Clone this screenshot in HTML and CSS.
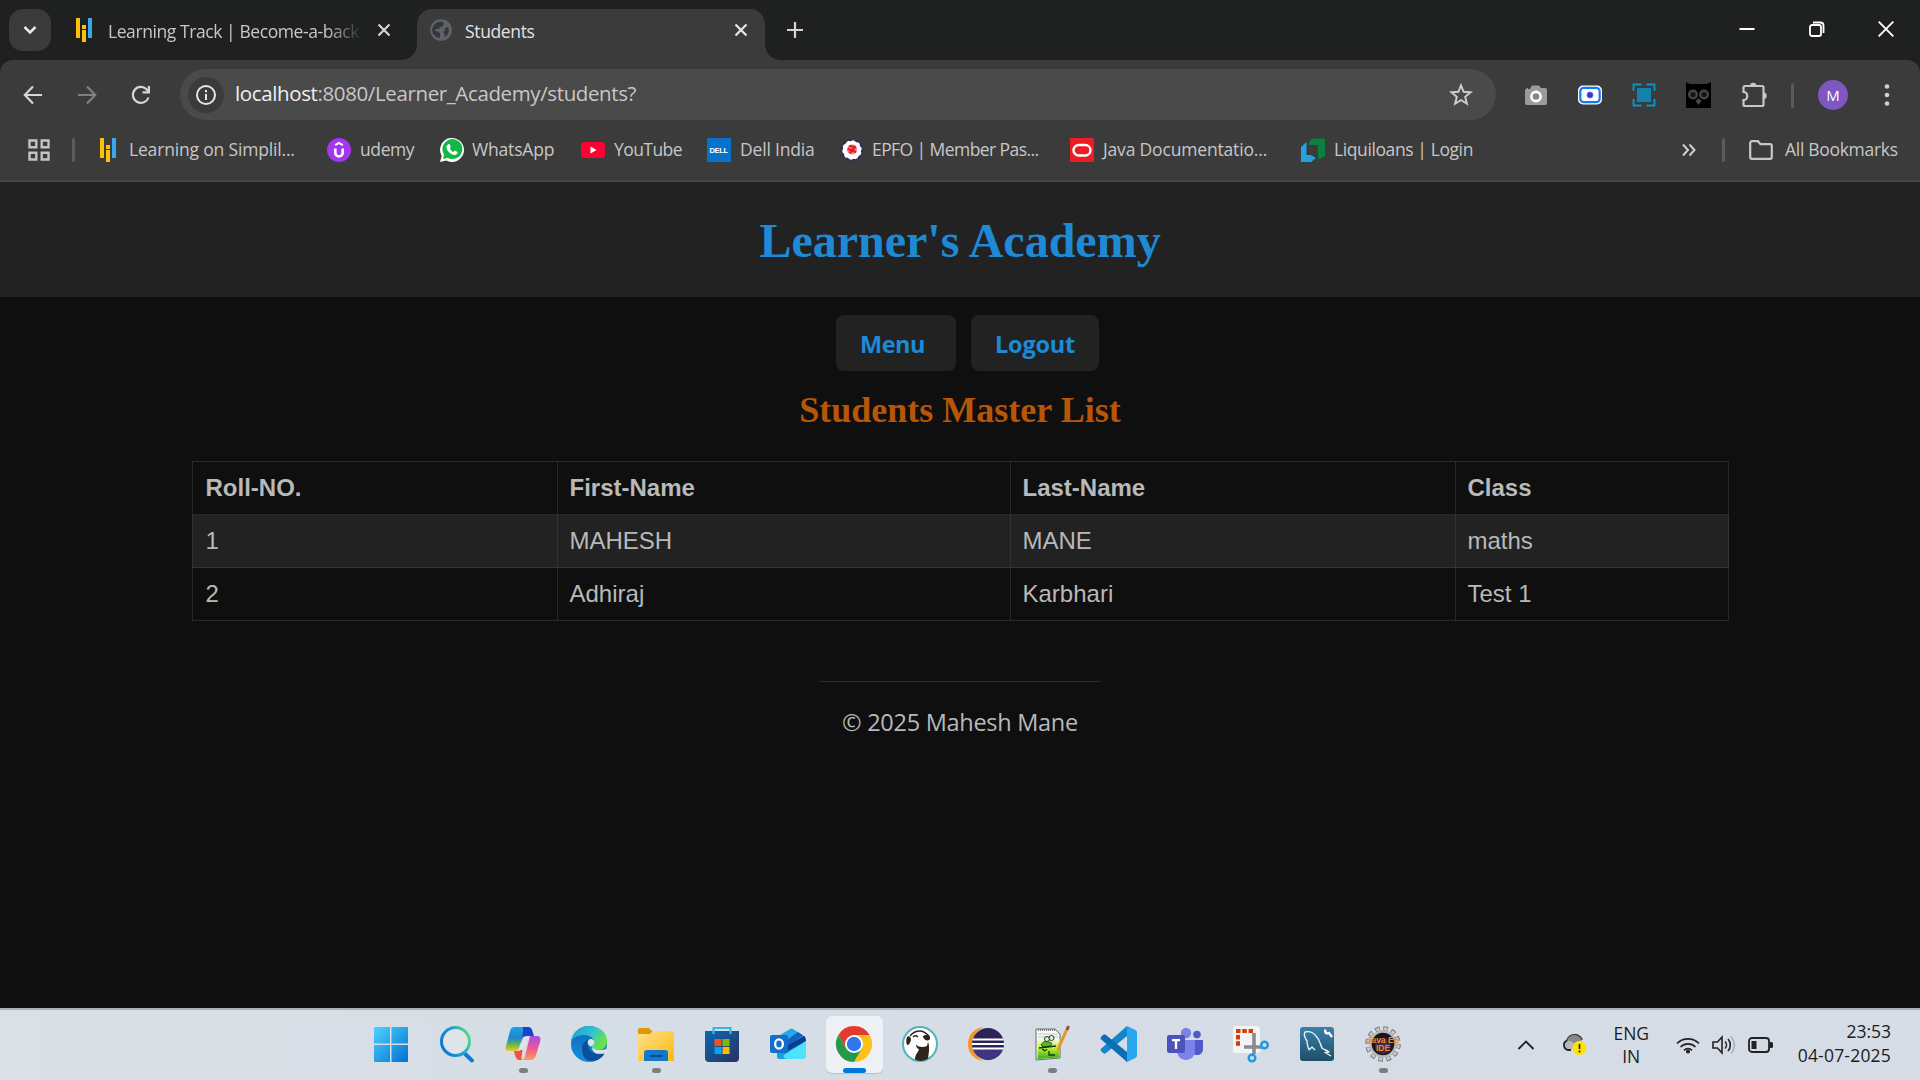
FILE: index.html
```html
<!DOCTYPE html>
<html lang="en">
<head>
<meta charset="utf-8">
<title>Students</title>
<link rel="stylesheet" href="styles.css">
</head>
<body>
<svg class="defs" width="0" height="0" aria-hidden="true">
  <defs>
    <symbol id="simpli" viewBox="0 0 16 24"><path fill="#ffc107" d="M0 0h4v20H0zM6 7h4v4H6zM6 12h4v12H6z"/><path fill="#36a9e8" d="M12 0h4v20h-4z"/></symbol>
    <symbol id="cross" viewBox="0 0 14 14"><path fill="none" stroke="currentColor" stroke-width="2.2" d="M1.5 1.5l11 11M12.500 1.500l-11 11"/></symbol>
    <linearGradient id="gWin" x1="0" y1="0" x2="1" y2="1"><stop offset="0" stop-color="#4fd3ff"/><stop offset="1" stop-color="#0070d0"/></linearGradient>
    <linearGradient id="gFind" x1="0" y1="0.6" x2="1" y2="0.2"><stop offset="0" stop-color="#0a78d6"/><stop offset=".55" stop-color="#1fa5c9"/><stop offset="1" stop-color="#5fe07c"/></linearGradient>
    <linearGradient id="gCopA" x1="0" y1="0" x2="0" y2="1"><stop offset="0" stop-color="#16a4ee"/><stop offset=".45" stop-color="#1f87c8"/><stop offset=".7" stop-color="#57b25c"/><stop offset="1" stop-color="#f2cc13"/></linearGradient>
    <linearGradient id="gCopB" x1="0" y1="0" x2="0" y2="1"><stop offset="0" stop-color="#a64df0"/><stop offset=".5" stop-color="#ef5690"/><stop offset="1" stop-color="#ff9a5a"/></linearGradient>
    <linearGradient id="gEdge" x1="0" y1="0" x2="1" y2=".5"><stop offset="0" stop-color="#2196de"/><stop offset=".55" stop-color="#2fc2cf"/><stop offset="1" stop-color="#6be34b"/></linearGradient>
    <linearGradient id="gEdge2" x1="0" y1="0" x2="0" y2="1"><stop offset="0" stop-color="#1164b4"/><stop offset="1" stop-color="#148fe0"/></linearGradient>
    <linearGradient id="gFold" x1="0" y1="0" x2="1" y2="1"><stop offset="0" stop-color="#ffe08a"/><stop offset="1" stop-color="#fdb913"/></linearGradient>
    <linearGradient id="gStore" x1="0" y1="0" x2="1" y2="1"><stop offset="0" stop-color="#0c68b8"/><stop offset="1" stop-color="#27325c"/></linearGradient>
    <linearGradient id="gSql" x1="0" y1="0" x2="0" y2="1"><stop offset="0" stop-color="#3a80aa"/><stop offset="1" stop-color="#1f4f68"/></linearGradient>
    <linearGradient id="gNote" x1="0" y1="0" x2="0" y2="1"><stop offset="0" stop-color="#f4fae6"/><stop offset=".5" stop-color="#b5ee2c"/><stop offset="1" stop-color="#2fae1a"/></linearGradient>
  </defs>
</svg>

<header class="browser">
  <div class="tabstrip">
    <div class="tab-search"><svg width="14" height="10" viewBox="0 0 14 10"><path d="M1.500 2l5.500 5.500L12.500 2" fill="none" stroke="#e8e8e8" stroke-width="2.500"/></svg></div>
    <div class="tab">
      <svg width="16" height="24"><use href="#simpli"/></svg>
      <span class="tab-title fade">Learning Track | Become-a-back</span>
      <svg class="close" width="14" height="14"><use href="#cross"/></svg>
    </div>
    <div class="tab active">
      <svg width="22" height="22" viewBox="0 0 22 22"><circle cx="11" cy="11" r="10.800" fill="#5f6368"/><path fill="#34363a" d="M11 2.500l3 1.500-1 3-3 1-1 2H6l-1 2 3 .5 2 2v4.500C5 18.500 2.200 15 2.200 11S6 2.500 11 2.500zM18 8c2 4 .5 8-3.500 10v-3l-1-2 2-2.500-1.500-1z"/></svg>
      <span class="tab-title">Students</span>
      <svg class="close" width="14" height="14"><use href="#cross"/></svg>
    </div>
    <svg class="newtab" width="16" height="16" viewBox="0 0 16 16"><path d="M8 0v16M0 8h16" stroke="#d5d5d5" stroke-width="2.200"/></svg>
    <div class="winctl">
      <svg width="16" height="16" viewBox="0 0 16 16"><path d="M.5 8h15" stroke="#fff" stroke-width="2"/></svg>
      <svg width="16" height="16" viewBox="0 0 16 16" fill="none" stroke="#fff" stroke-width="1.800"><rect x="1" y="4" width="11" height="11" rx="2"/><path d="M4 1.500h7.500a3 3 0 0 1 3 3V12"/></svg>
      <svg width="16" height="16" viewBox="0 0 16 16"><path d="M.7.700l14.600 14.600M15.300.700L.7 15.300" stroke="#fff" stroke-width="1.900"/></svg>
    </div>
  </div>

  <div class="toolbar">
    <svg width="20" height="20" viewBox="0 0 20 20" fill="none" stroke="#d6d6d6" stroke-width="2.200"><path d="M19 10H2.500M10 1.500L1.800 10l8.200 8.500"/></svg>
    <svg width="20" height="20" viewBox="0 0 20 20" fill="none" stroke="#818181" stroke-width="2.200"><path d="M1 10h16.500M10 1.500l8.200 8.500-8.200 8.500"/></svg>
    <svg width="20" height="20" viewBox="0 0 20 20"><path d="M17.500 12.500A8 8 0 1 1 15.500 4.200L18 7" fill="none" stroke="#d6d6d6" stroke-width="2.200"/><path d="M19 1v7.500h-7.500V6.300h5.300V1z" fill="#d6d6d6"/></svg>
    <div class="omnibox">
      <span class="info"><svg width="20" height="20" viewBox="0 0 20 20"><circle cx="10" cy="10" r="9" fill="none" stroke="#e6e6e6" stroke-width="2"/><path d="M9 5h2v2.200H9zM9 9h2v6H9z" fill="#e6e6e6"/></svg></span>
      <span class="url"><b>localhost</b>:8080/Learner_Academy/students?</span>
      <svg width="24" height="24" viewBox="0 0 24 24"><path d="M12 2.300l2.600 6.500 7 .5-5.400 4.500 1.700 6.900L12 17l-5.900 3.700 1.700-6.900-5.400-4.500 7-.5z" fill="none" stroke="#cfcfcf" stroke-width="1.900"/></svg>
    </div>
    <div class="exts">
      <svg width="24" height="24" viewBox="0 0 24 24"><path fill="#9b9b9b" d="M1 7l2-2h1v1h2l2-3.500h7L17 5h4a2 2 0 0 1 2 2v13a2 2 0 0 1-2 2H3a2 2 0 0 1-2-2z"/><circle cx="12" cy="13.500" r="4.600" fill="#858585" stroke="#fff" stroke-width="2.600"/></svg>
      <svg width="24" height="24" viewBox="0 0 24 24"><rect x="0" y="2.500" width="24" height="19" rx="5" fill="#fff"/><rect x="2.300" y="4.800" width="19.400" height="14.400" rx="3.500" fill="#fff" stroke="#1478ff" stroke-width="2.200"/><circle cx="12" cy="12" r="3" fill="#303bd0" stroke="#5f68e8" stroke-width="1"/></svg>
      <svg width="24" height="24" viewBox="0 0 24 24"><path fill="#1183ac" d="M5 5h14v14H5z"/><path fill="none" stroke="#0b96cf" stroke-width="1.800" d="M1.500 8V1.500h8M14.500 1.500h8V8M22.500 16v6.500h-8M9.500 22.500h-8V16"/></svg>
      <svg width="25" height="26" viewBox="0 0 25 26"><path fill="#000" d="M0 0l4 2h17l4-2v26H0z"/><g fill="#151515" stroke="#454545" stroke-width="2.400"><circle cx="7" cy="12.500" r="3.800"/><circle cx="18" cy="12.500" r="3.800"/></g><path fill="#454545" d="M12.500 16l3 3-3 4-3-4z"/></svg>
      <svg width="26" height="26" viewBox="0 0 26 26"><path fill="none" stroke="#c7c7c7" stroke-width="2.200" d="M4 4h17a1.500 1.500 0 0 1 1.500 1.500v17A1.500 1.500 0 0 1 21 24H4a1.500 1.500 0 0 1-1.500-1.500v-4.300c5 0 5-8.400 0-8.400V5.500A1.500 1.500 0 0 1 4 4z"/><path fill="#c7c7c7" d="M9 4a3.200 3.200 0 0 1 6.400 0zM22.500 10.500a3.200 3.200 0 0 1 0 6.400z"/></svg>
    </div>
    <i class="vline"></i>
    <span class="avatar">M</span>
    <svg width="6" height="26" viewBox="0 0 6 26" fill="#d0d0d0"><circle cx="3" cy="4.500" r="2.300"/><circle cx="3" cy="13" r="2.300"/><circle cx="3" cy="21.500" r="2.300"/></svg>
  </div>

  <nav class="bookmarks">
    <svg width="22" height="22" viewBox="0 0 22 22" fill="none" stroke="#c4c4c4" stroke-width="2.400"><path d="M1.500 1.500h6.800v6.800H1.500zM13.700 1.500h6.800v6.800h-6.800zM1.500 13.700h6.800v6.800H1.500zM13.700 13.700h6.800v6.800h-6.800z"/></svg>
    <i class="vline"></i>
    <svg width="16" height="24"><use href="#simpli"/></svg><span class="loose">Learning on Simplil...</span>
    <svg width="24" height="24" viewBox="0 0 24 24"><circle cx="12" cy="12" r="12" fill="#a435f0"/><path d="M8.300 10.500v4.300a3.700 3.700 0 0 0 7.400 0v-4.300" fill="none" stroke="#fff" stroke-width="2.600"/><path d="M8.200 7.200L12 4.900l3.800 2.300" fill="none" stroke="#fff" stroke-width="2"/></svg><span>udemy</span>
    <svg width="24" height="24" viewBox="0 0 24 24"><path fill="#fff" d="M0 24l1.700-6A12 12 0 1 1 6.200 22.400z"/><path fill="#10b943" d="M3 21l1-4.500a10 10 0 1 1 3.500 3.300z"/><path fill="#fff" d="M8 6.500c1-.8 1.700-.3 2 .5l.8 1.900-1 1.500c.8 1.600 2 2.800 3.700 3.500l1.300-1.300 2.700 1.300c.3 2-1.700 3.300-3.500 3-4-.8-7.300-4-7.500-7.600 0-1 .6-2 1.500-2.800z"/></svg><span class="loose">WhatsApp</span>
    <svg width="24" height="16" viewBox="0 0 24 16"><rect width="24" height="16" rx="3.500" fill="#ff0033"/><path fill="#fff" d="M9.500 4.500v7l6-3.500z"/></svg><span class="tight">YouTube</span>
    <svg width="24" height="24" viewBox="0 0 24 24"><path fill="#0672cb" d="M0 0h24v24H0z"/><text class="dell" x="2.500" y="15">DELL</text></svg><span class="loose">Dell India</span>
    <svg width="22" height="22" viewBox="0 0 22 22"><circle cx="11" cy="11" r="9.800" fill="#fff"/><circle cx="11" cy="11" r="10" fill="none" stroke="#182a70" stroke-width="1.800" stroke-dasharray="2.600 3.680"/><circle cx="11" cy="10.500" r="5" fill="#f8747a"/><path d="M7 9.500l3 2 5-4M8.500 14l3.500-3 3 2.500M8 7l6 1" fill="none" stroke="#e01c26" stroke-width="2"/></svg><span class="tight">EPFO | Member Pas...</span>
    <svg width="24" height="24" viewBox="0 0 24 24"><path fill="#ed1c24" d="M0 0h24v24H0z"/><rect x="3.500" y="7" width="17" height="10.500" rx="5.250" fill="none" stroke="#fff" stroke-width="2.400"/></svg><span class="loose">Java Documentatio...</span>
    <svg width="24" height="24" viewBox="0 0 24 24"><path fill="#22a2df" d="M0 9l5.500-5v13h4.500l5 3-5 4H0z"/><path fill="#0c8042" d="M8 4l3-3.500h13V18l-7 3.500V7h-9z"/></svg><span>Liquiloans | Login</span>
    <svg width="14" height="14" viewBox="0 0 14 14" fill="none" stroke="#cfcfcf" stroke-width="2"><path d="M1 1.500L6 7l-5 5.500M7.500 1.500L12.500 7l-5 5.500"/></svg>
    <i class="vline"></i>
    <svg width="24" height="20" viewBox="0 0 24 20"><path d="M1.200 17V3A1.800 1.800 0 0 1 3 1.200h6l2.500 3H21A1.800 1.800 0 0 1 22.800 6v11A1.800 1.800 0 0 1 21 18.800H3A1.800 1.800 0 0 1 1.200 17z" fill="none" stroke="#c7c7c7" stroke-width="2.200"/></svg><span class="all">All Bookmarks</span>
  </nav>
</header>

<main class="page">
  <div class="banner"><h1>Learner's Academy</h1></div>
  <div class="actions"><a class="btn menu">Menu</a><a class="btn logout">Logout</a></div>
  <h2>Students Master List</h2>
  <table class="list">
    <colgroup><col class="c1"><col class="c2"><col class="c3"><col class="c4"></colgroup>
    <tr><th>Roll-NO.</th><th>First-Name</th><th>Last-Name</th><th>Class</th></tr>
    <tr class="odd"><td>1</td><td>MAHESH</td><td>MANE</td><td>maths</td></tr>
    <tr><td>2</td><td>Adhiraj</td><td>Karbhari</td><td>Test 1</td></tr>
  </table>
  <footer><span>© 2025 Mahesh Mane</span></footer>
</main>

<div class="taskbar">
  <div class="apps">
    <div class="app"><svg viewBox="0 0 36 36"><path fill="url(#gWin)" d="M1 2a1 1 0 0 1 1-1h15v16.500H1zM18.500 1H34a1 1 0 0 1 1 1v15.500H18.500zM1 19h16v17H2a1 1 0 0 1-1-1zM18.500 19H35v16a1 1 0 0 1-1 1H18.500z"/></svg></div>
    <div class="app"><svg viewBox="0 0 36 36"><path d="M24 26l9 8.500" stroke="#1479d4" stroke-width="4" stroke-linecap="round"/><circle cx="16.500" cy="15.500" r="14" fill="#dfe5ea" stroke="url(#gFind)" stroke-width="3"/></svg></div>
    <div class="app run"><svg viewBox="0 0 36 36"><path fill="url(#gCopA)" d="M9 1h14c-2 0-3 2-4 5l-5 16c-1 2-2 3-4 3H4c-3 0-4-2-3-5L5 5c1-3 2-4 4-4z"/><path fill="#1745c5" d="M18 1h6c2 0 3 2 4 6l1 3h-6c-3 0-4 1-5 4l-2 4 2-12z"/><path fill="#f4523b" d="M9 25h4c2 0 3-1 4-3l1-3-1 9c-1 4-1 6 2 6h-5c-2 0-3-2-4-5z"/><path fill="url(#gCopB)" d="M25 10h7c3 0 4 2 3 6l-4 13c-1 4-3 5-6 5h-9c2 0 3-1 4-4z"/><path fill="#dde3ea" d="M18 11l5-1-5 14h-4z"/></svg></div>
    <div class="app"><svg viewBox="0 0 36 36"><circle cx="18" cy="18" r="18" fill="url(#gEdge2)"/><path fill="url(#gEdge)" d="M0 16C1 6 9 0 18 0c11 0 18 7 18 15 0 6-4 9-9 9-4 0-6-1-6-2 0-2 2-2 2-6 0-4-4-7-10-7C7 9 2 11 0 16z"/><path fill="#0b4f9c" d="M11 23c0-6 4-9 7-9-2 4-1 8 2 11 4 4 9 4 14 2-4 7-12 10-18 7-3-2-5-6-5-11z"/><path fill="#dce3eb" d="M22 21c-2-1-3 0-5-3-1-3 1-5 3-5 3 0 4 3 3 5-1 2-3 2-1 4 2 2 6 3 14 1v5c-1-2-9 2-13-2-2-2-2-3-1-5z"/></svg></div>
    <div class="app run"><svg viewBox="0 0 36 36"><path fill="#dc9a08" d="M0 4a2 2 0 0 1 2-2h9l4 4v6H0z"/><path fill="url(#gFold)" d="M0 8h12l3-3h20a1 1 0 0 1 1 1v29H0z"/><path fill="#1278cc" d="M6 35v-8a3 3 0 0 1 3-3h18a3 3 0 0 1 3 3v8z"/><path d="M12 30h12" stroke="#0b4d90" stroke-width="2" stroke-linecap="round"/></svg></div>
    <div class="app"><svg viewBox="0 0 36 36"><path d="M9.500 8V2h17v6" fill="none" stroke="#31b9ec" stroke-width="2.200"/><path fill="url(#gStore)" d="M1 5h34v27a4 4 0 0 1-4 4H5a4 4 0 0 1-4-4z"/><path d="M9.500 8V5M26.500 8V5" stroke="#31b9ec" stroke-width="2.200"/><path fill="#f25022" d="M10.500 13h7v7h-7z"/><path fill="#7fba00" d="M18.500 13h7v7h-7z"/><path fill="#00a4ef" d="M10.500 21h7v7h-7z"/><path fill="#ffb900" d="M18.500 21h7v7h-7z"/></svg></div>
    <div class="app"><svg viewBox="0 0 36 36"><path fill="#28a8ea" d="M7 11L20 3c1-.5 2-.5 3 0l11 7v6H7z"/><path fill="#1560bd" d="M17 14L28 6l5 3.500-16 12z"/><path fill="#1a9ee2" d="M7 22l28-6v14a3 3 0 0 1-3 3H9a2 2 0 0 1-2-2z"/><path fill="#4ee3fb" d="M14 29l22-14v15a3 3 0 0 1-3 3H17c-3 0-4-3-3-4z"/><path fill="#053f90" d="M17 20l17-10c1 .5 2 2 2 5L18 25z"/><rect x="0" y="9" width="18" height="18" rx="2" fill="#0f6fcb"/><ellipse cx="9" cy="18" rx="3.900" ry="4.600" fill="none" stroke="#fff" stroke-width="2.300"/></svg></div>
    <div class="app current"><svg viewBox="0 0 36 36"><path fill="#e43a2e" d="M2.400 9A18 18 0 0 1 33.600 9L18 9l-7.800 13.500z"/><path fill="#fdc018" d="M33.600 9A18 18 0 0 1 18 36l7.800-13.500L18 9z"/><path fill="#279847" d="M18 36A18 18 0 0 1 2.400 9l7.800 13.500h15.600z"/><circle cx="18" cy="18" r="9" fill="#fff"/><circle cx="18" cy="18" r="7.200" fill="#2f77ee"/></svg></div>
    <div class="app"><svg viewBox="0 0 36 36"><circle cx="18" cy="18" r="17" fill="#fff" stroke="#53b3bd" stroke-width="2"/><path fill="none" stroke="#30221c" stroke-width="1.300" d="M8 10c3-4 7-5 10-5 3 0 6 2 9 5M11 11c2-2 4-1 5 0"/><path fill="#30221c" d="M21 10c2-1.500 5-1.500 7 .5.500 3-1 4-3 4-2-.5-4-2-4-4.500zM5 11c2-2 4 0 4 3-1 3-2 5-4 5-1-3-1-6 0-8zM13 33.500c0-5 3-7 4-10-2-1-3-3-3-5 3 3 7 3 11 1.500l1-4c1.500 3 1 7 1 9l-1 7.500c-4 3-9 3-13 1z"/></svg></div>
    <div class="app"><svg viewBox="0 0 36 36"><path fill="#f7941e" d="M16 1C6 2 0 9 0 18s6 16 16 17C8 31 4 25 4 18S8 5 16 1z"/><circle cx="20" cy="18" r="16" fill="#2c2255"/><path fill="#5145a4" opacity=".55" d="M5 23h30a16 16 0 0 1-30 0z"/><path stroke="#fff" stroke-width="2" d="M4.500 13.500h31M4 18h32M4.500 22.500h31"/></svg></div>
    <div class="app run"><svg viewBox="0 0 36 36"><path fill="#f8f8f4" stroke="#6a6a62" d="M2 3h19l5 5v24L2 34z"/><path d="M4 4h17" stroke="#777" stroke-width="2" stroke-dasharray="1 1"/><path stroke="#b7c7cd" d="M4 8h20M4 11h20"/><path fill="url(#gNote)" d="M3.500 13h22v18.500l-22 1.500z"/><path fill="#58b52c" stroke="#21450e" stroke-width=".8" d="M7 19c2-4 5-4 8-3 4 1 4 3 0 4-3 1-6 1-8-1z"/><circle cx="13" cy="13" r="2.500" fill="#d9f2d5" stroke="#243d1e"/><circle cx="17.500" cy="12" r="2.500" fill="#d9f2d5" stroke="#243d1e"/><path stroke="#183715" stroke-width="1.300" fill="none" d="M5 22l17-2M9 20c-2 4 2 6 4 3M15 25v4h6"/><path d="M24 25l1-4L33 3" stroke="#e39a25" stroke-width="3" fill="none"/><path d="M33 4l1.500-4" stroke="#9a4b45" stroke-width="3"/></svg></div>
    <div class="app"><svg viewBox="0 0 36 36"><path fill="#1386cd" d="M26 0v10L5 27c-1 1-2 1-3 0l-2-2c-.6-1-.5-2 .3-2.500z"/><path fill="#0b6fb5" d="M26 36V26L5 9C4 8.400 3 8.400 2 9L0 11c-.6 1-.5 2 .3 2.500z"/><path fill="#28a8f0" d="M26 0l8.500 4A3 3 0 0 1 36 6.500v23a3 3 0 0 1-1.500 2.500L26 36z"/></svg></div>
    <div class="app"><svg viewBox="0 0 36 36"><circle cx="19" cy="7" r="5.200" fill="#7b83eb"/><circle cx="30" cy="8.500" r="3.800" fill="#5059c9"/><path fill="#5059c9" d="M25 14h11v9c0 4-3 6-6 6s-5-2-5-5z"/><path fill="#7b83eb" d="M10 14h18v11c0 5-4 9-9 9s-9-4-9-9z"/><rect x="0" y="9" width="18" height="18" rx="2" fill="#4b53bc"/><path fill="#fff" d="M5 13h8v2.200h-2.800V23H7.800v-7.800H5z"/></svg></div>
    <div class="app"><svg viewBox="0 0 36 36"><rect x="0" y="0" width="27" height="27" rx="3" fill="#f3f4f5"/><path d="M3 5h17M5 9v11" fill="none" stroke="#d83b01" stroke-width="4" stroke-dasharray="4.500 1.800"/><path d="M21 7v21M11 21h18" stroke="#888c91" stroke-width="3.600"/><g fill="none" stroke="#1d9ce5" stroke-width="2.400"><circle cx="31.500" cy="19" r="3.300"/><circle cx="19" cy="32" r="3.300"/></g></svg></div>
    <div class="app"><svg viewBox="0 0 36 36"><rect x="1" y="1" width="34" height="34" rx="3" fill="url(#gSql)"/><path fill="none" stroke="#e8f2f7" stroke-width="1.400" stroke-linejoin="round" d="M10 24c-1-3-2-6-2-9C6 12 4 9 6 6c4-1 8 0 11 4 4 4 4 8 6 12 2 2 5 2 7 4l-4 .5 6 3.500M10 24l3-3 3 3"/><path d="M26.500 3.500c-1 3 1 4.500 3.500 3.500l3 4" fill="none" stroke="#fff" stroke-width="2.400"/></svg></div>
    <div class="app run"><svg viewBox="0 0 36 36"><circle cx="18" cy="18" r="15.500" fill="none" stroke="#77797b" stroke-width="4.600" stroke-dasharray="4.600 3.500"/><circle cx="18" cy="18" r="15.300" fill="none" stroke="#c9cacb" stroke-width="3" stroke-dasharray="3.200 4.810" stroke-dashoffset="-.7"/><circle cx="18" cy="18" r="12.500" fill="#1a1420" stroke="#b9babb" stroke-width="2.400"/><circle cx="18" cy="20" r="8" fill="#372a4e"/><text class="ee" x="18" y="16.500">Java EE</text><text class="ee" x="18" y="25">IDE</text></svg></div>
  </div>
  <div class="tray">
    <svg class="t-up" width="18" height="10" viewBox="0 0 18 10"><path d="M1.500 9L9 1.500 16.500 9" fill="none" stroke="#222" stroke-width="1.900"/></svg>
    <svg class="t-cloud" width="26" height="22" viewBox="0 0 26 22"><path d="M9 16H6A5 5 0 0 1 5 6.500C7 1.500 10 1 12.500 1c4 0 6.500 2.500 7.500 5" fill="#b5b7b9" stroke="#222" stroke-width="1.800"/><path d="M5 7c6-1 6 4 9 2s4-3 6-2c-1-4-4-6-7.500-6C9 1 6 3 5 7z" fill="#888"/><circle cx="17.500" cy="14" r="7" fill="#fde300"/><path d="M17.500 10v5M17.500 16.500v2" stroke="#222" stroke-width="1.700"/></svg>
    <div class="lang"><span>ENG</span><span>IN</span></div>
    <svg class="t-wifi" width="24" height="18" viewBox="0 0 24 18" fill="none" stroke="#222" stroke-width="1.700"><path d="M1 7.500a15.500 15.500 0 0 1 22 0M4.500 11a10.600 10.600 0 0 1 15 0M8 14.300a5.700 5.700 0 0 1 8 0"/><circle cx="12" cy="15.500" r="1.200" fill="#222"/></svg>
    <svg class="t-vol" width="24" height="20" viewBox="0 0 24 20" fill="none" stroke="#222" stroke-width="1.600"><path d="M1 7h4.500L10 2v16l-4.500-5H1z"/><path d="M13 6.500a5 5 0 0 1 0 7M16 4a9 9 0 0 1 0 12"/><path stroke="#aeb3b8" d="M18.800 1.500a12 12 0 0 1 0 17"/></svg>
    <svg class="t-bat" width="25" height="16" viewBox="0 0 25 16"><rect x="1" y="1" width="20" height="14" rx="3" fill="none" stroke="#222" stroke-width="1.800"/><path fill="#222" d="M3.500 4h5v8h-5zM22 5h1.500a1.500 1.500 0 0 1 1.500 1.500v3a1.500 1.500 0 0 1-1.500 1.500H22z"/></svg>
    <div class="clock"><span>23:53</span><span class="date">04-07-2025</span></div>
  </div>
</div>
</body>
</html>
```
FILE: styles.css
```css
* { box-sizing: border-box; }
body {
  margin: 0;
  width: 1920px;
  height: 1080px;
  overflow: hidden;
  display: flex;
  flex-direction: column;
  background: #0f0f0f;
  font-family: "Open Sans", "Noto Sans", sans-serif;
}
svg { display: block; flex: none; overflow: visible; }
.defs { position: absolute; }

/* browser chrome */
.browser {
  height: 182px;
  background: #1f2120;
  color: #c7c7c7;
  font-size: 17.5px;
  flex: none;
}
.tabstrip { height: 60px; display: flex; align-items: flex-start; padding-left: 9px; }
.tab-search {
  width: 42px; height: 42px; margin-top: 9px;
  border-radius: 14px; background: #3b3b3b;
  display: flex; align-items: center; justify-content: center;
}
.tab {
  width: 366px; height: 51px; margin-top: 9px;
  padding: 0 26px 9px 25px;
  display: flex; align-items: center;
  position: relative;
}
.tab-title { flex: 1; margin-left: 16px; white-space: nowrap; letter-spacing: -.35px; line-height: 28px; padding-top: 2px; }
.fade { flex: none; width: 251px; margin-right: 18px; letter-spacing: -.42px; -webkit-mask-image: linear-gradient(90deg, #000 218px, transparent 255px); mask-image: linear-gradient(90deg, #000 218px, transparent 255px); }
.close { color: #d4d4d4; }
.active {
  width: 348px; padding: 0 17px 9px 13px; color: #e3e3e3;
  background: #3b3b3b; border-radius: 15px 15px 0 0;
}
.active .tab-title { margin-left: 13px; }
.active .close { color: #e8e8e8; }
.active::before, .active::after {
  content: ""; position: absolute; bottom: 0; width: 15px; height: 15px;
}
.active::before { left: -15px; background: radial-gradient(circle at 0 0, transparent 14.5px, #3b3b3b 15px); }
.active::after { right: -15px; background: radial-gradient(circle at 100% 0, transparent 14.5px, #3b3b3b 15px); }
.newtab { margin: 22px 0 0 22px; }
.winctl { margin: 21px 26px 0 auto; display: flex; gap: 53.500px; }

.toolbar {
  height: 70px; background: #3b3b3b; border-radius: 13px 13px 0 0;
  display: flex; align-items: center; padding: 0 30px 0 23px;
}
.toolbar > svg { margin-right: 34px; }
.toolbar > svg:last-child { margin: 0; }
.omnibox {
  width: 1317px; height: 51px; margin: -1px 0 0 -5px; border-radius: 26px;
  background: #4a4a4a; display: flex; align-items: center; padding: 0 23px 0 8px;
}
.info {
  width: 36px; height: 36px; border-radius: 50%; background: #3b3b3b;
  display: flex; align-items: center; justify-content: center;
}
.url { flex: 1; margin: -3px 0 0 11px; font-size: 20.500px; letter-spacing: -.38px; color: #c7c7c7; }
.url b { font-weight: 400; color: #f0f0f0; }
.exts { display: flex; align-items: center; gap: 30px; margin: -1px 0 0 28px; }
.vline { width: 3px; height: 24px; border-radius: 2px; background: #5b5b5b; }
.toolbar .vline { height: 25px; margin-left: 24px; }
.avatar {
  width: 30px; height: 30px; border-radius: 50%; margin: 0 36px 0 24px;
  background: #7e57c2; color: #fff; font-size: 15px; line-height: 30px; text-align: center;
}

.bookmarks {
  height: 52px; background: #3b3b3b; border-bottom: 2px solid #474747;
  padding: 0 0 11px 28px;
  display: grid; align-items: center; white-space: nowrap; letter-spacing: -.4px;
  grid-template-columns: 44px 28px 29px 198px 33px 80px 32px 109px 33px 93px 33px 101px 31px 198px 33px 198px 33px 348px 40px 27px 36px 120px;
}
.bookmarks span { margin-top: -2px; }
.bookmarks .loose { letter-spacing: -.17px; }
.bookmarks .tight { letter-spacing: -.57px; }
.bookmarks .all { letter-spacing: -.3px; }
.dell { font: bold 7.500px "Liberation Sans", sans-serif; fill: #fff; letter-spacing: -.3px; }

/* students page */
.page { flex: 1; display: flex; flex-direction: column; align-items: center; }
.banner { width: 100%; height: 115px; background: #222; text-align: center; }
h1, h2 { font-family: "Liberation Serif", serif; margin: 0; font-weight: 700; }
h1 { font-size: 48px; line-height: 54px; padding-top: 32px; color: #1e8ad6; }
.actions { display: flex; gap: 15px; margin: 18px 0 0 15px; }
.btn {
  height: 56px; padding: 12px 0 0 24px; border-radius: 8px;
  background: #222; color: #1e8ad6; font-size: 23.500px; font-weight: 700; line-height: 34px; letter-spacing: -.2px;
}
.menu { width: 120px; letter-spacing: -.5px; }
.logout { width: 128px; }
h2 { margin-top: 18px; font-size: 36px; line-height: 42px; color: #b85608; }
.list {
  width: 1536px; margin-top: 30px; table-layout: fixed; border-collapse: collapse;
  font: 24px/28px "Liberation Sans", Arial, sans-serif; color: #b9b9b9;
}
.list th, .list td { height: 53px; padding: 0 12px; text-align: left; border: 1px solid #292929; }
.list th:first-child, .list td:first-child { padding-left: 13px; }
.odd { background: #222; }
.list .odd td { border-color: #343434; border-top-color: #292929; }
.c1 { width: 365px; } .c2 { width: 453px; } .c3 { width: 445px; } .c4 { width: 273px; }
footer {
  width: 282px; margin-top: 60px; padding-top: 23px; border-top: 1px solid #2a2a2a;
  text-align: center; font-size: 23.500px; line-height: 34px; letter-spacing: -.28px; color: #b9b9b9; white-space: nowrap;
}

/* taskbar */
.taskbar {
  height: 72px; border-top: 2px solid #a9afb5; background: linear-gradient(90deg, #dae0e5, #d5dde6 35%, #d6dce5);
  display: flex; flex: none; color: #1c1c1c;
}
.apps { display: flex; flex: none; margin-left: 358px; }
.app { width: 66.150px; height: 70px; padding: 16px 15px 0; position: relative; }
.app svg { width: 36px; height: 36px; position: relative; }
.run::after, .current::after {
  content: ""; position: absolute; left: 29px; bottom: 7px; width: 9px; height: 5px; border-radius: 3px; background: #7b7f84;
}
.current::before {
  content: ""; position: absolute; left: 5px; top: 6px; width: 57px; height: 57px; border-radius: 6px;
  background: #edf1f5; box-shadow: 0 1px 1px #b9c0c8;
}
.current::after { left: 22px; width: 23px; background: #0078d7; }
.ee { font: bold 8.500px "Liberation Sans", sans-serif; fill: #f08a24; text-anchor: middle; }
.tray {
  flex: 1; display: flex; align-items: center; padding: 0 29px 0 101px;
  font-size: 17.500px; line-height: 23px;
}
.t-cloud { margin-left: 27px; }
.lang { width: 60px; margin: 0 0 0 13px; display: flex; flex-direction: column; align-items: center; }
.t-wifi { margin-left: 15px; }
.t-vol { margin-left: 12px; }
.t-bat { margin-left: 12px; }
.clock { margin: -4px 0 0 auto; display: flex; flex-direction: column; align-items: flex-end; line-height: 24px; }
.date { letter-spacing: .2px; }
```
